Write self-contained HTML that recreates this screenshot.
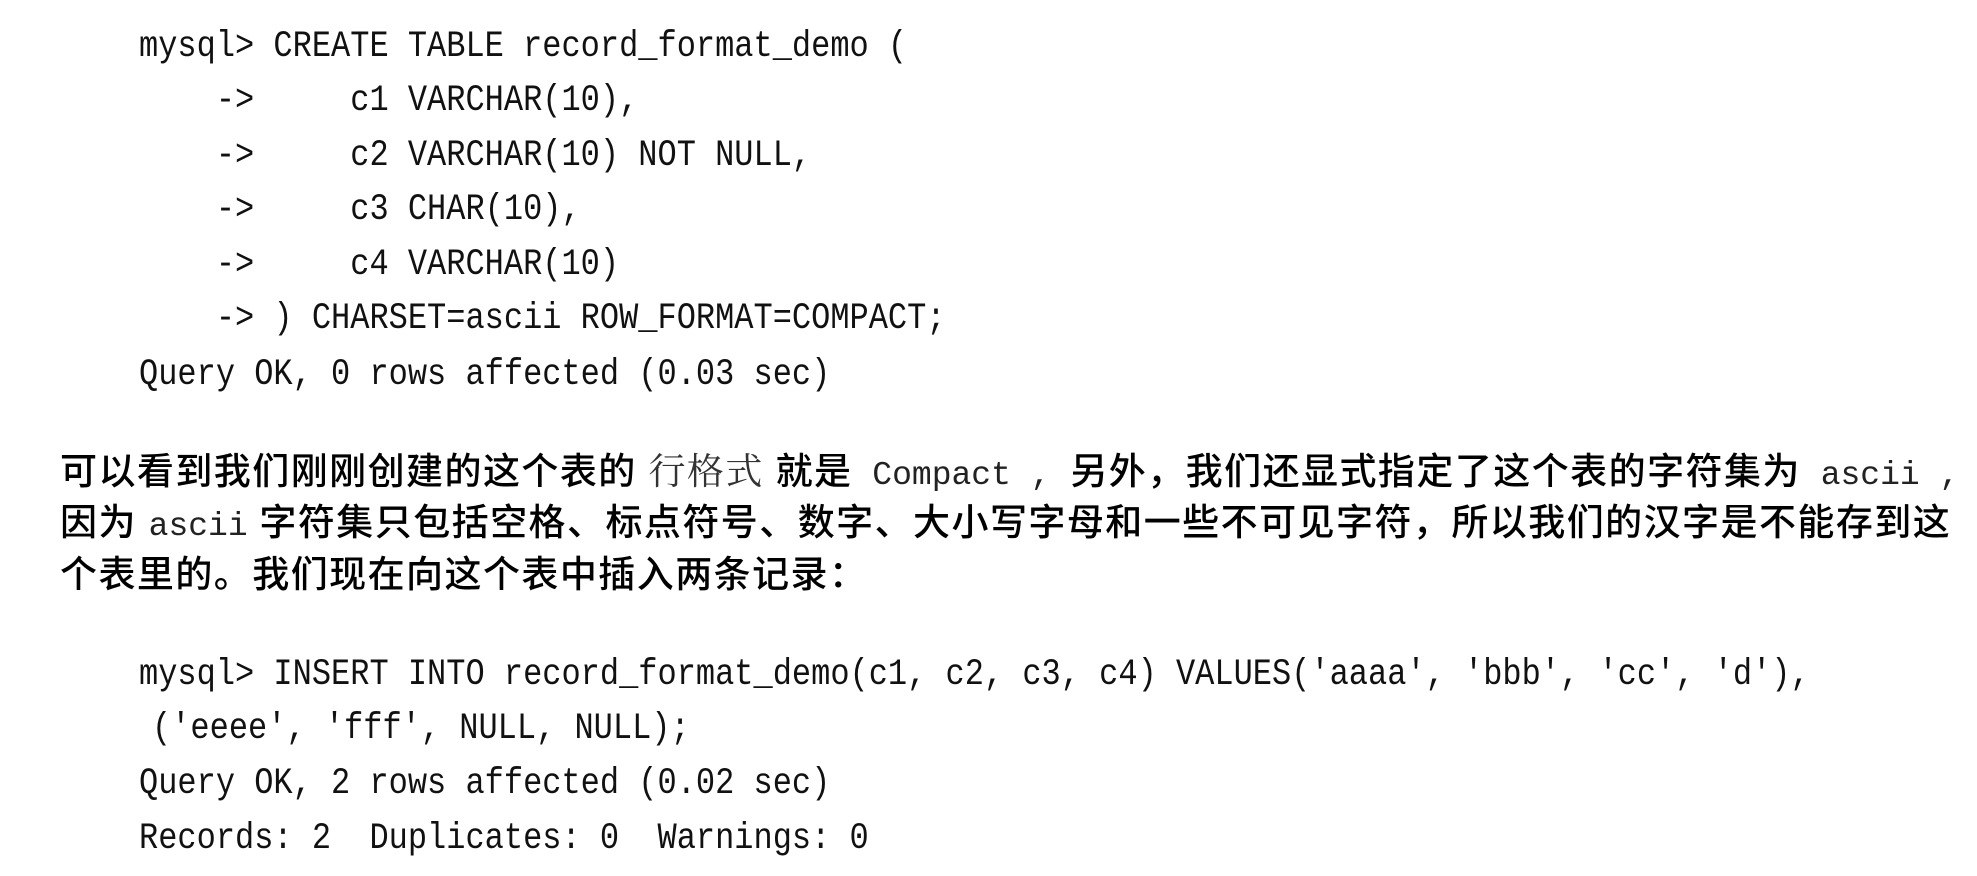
<!DOCTYPE html>
<html><head><meta charset="utf-8"><style>
html,body{margin:0;padding:0;background:#fff;}
body{width:1977px;height:876px;position:relative;overflow:hidden;}
.c{position:absolute;left:139px;height:56px;line-height:56px;font-family:"Liberation Mono",monospace;font-size:32px;color:#111;white-space:pre;transform:scaleY(1.15);transform-origin:left center;}
.t{position:absolute;left:60px;height:50px;line-height:50px;font-family:"Liberation Sans","Noto Sans CJK SC",sans-serif;font-size:37px;letter-spacing:1.45px;color:#000;white-space:pre;font-weight:500;}
.m{font-family:"Liberation Mono",monospace;font-size:33px;letter-spacing:0;color:#222;font-weight:normal;}
.s{font-family:"Noto Serif CJK SC",serif;font-weight:normal;color:#333;}
</style></head><body>
<div class="c" style="top:19px">mysql&gt; CREATE TABLE record_format_demo (</div>
<div class="c" style="top:73px">    -&gt;     c1 VARCHAR(10),</div>
<div class="c" style="top:128px">    -&gt;     c2 VARCHAR(10) NOT NULL,</div>
<div class="c" style="top:182px">    -&gt;     c3 CHAR(10),</div>
<div class="c" style="top:237px">    -&gt;     c4 VARCHAR(10)</div>
<div class="c" style="top:291px">    -&gt; ) CHARSET=ascii ROW_FORMAT=COMPACT;</div>
<div class="c" style="top:347px">Query OK, 0 rows affected (0.03 sec)</div>

<div class="t" style="top:443px">可以看到我们刚刚创建的这个表的 <span class="s">行格式</span> 就是<span class="m"> Compact , </span>另外，我们还显式指定了这个表的字符集为<span class="m"> ascii ,</span></div>
<div class="t" style="top:498px">因为 <span class="m">ascii</span> 字符集只包括空格、标点符号、数字、大小写字母和一些不可见字符，所以我们的汉字是不能存到这</div>
<div class="t" style="top:550px">个表里的。我们现在向这个表中插入两条记录：</div>

<div class="c" style="top:647px">mysql&gt; INSERT INTO record_format_demo(c1, c2, c3, c4) VALUES('aaaa', 'bbb', 'cc', 'd'),</div>
<div class="c" style="top:701px;left:152px">('eeee', 'fff', NULL, NULL);</div>
<div class="c" style="top:756px">Query OK, 2 rows affected (0.02 sec)</div>
<div class="c" style="top:811px">Records: 2  Duplicates: 0  Warnings: 0</div>
</body></html>
